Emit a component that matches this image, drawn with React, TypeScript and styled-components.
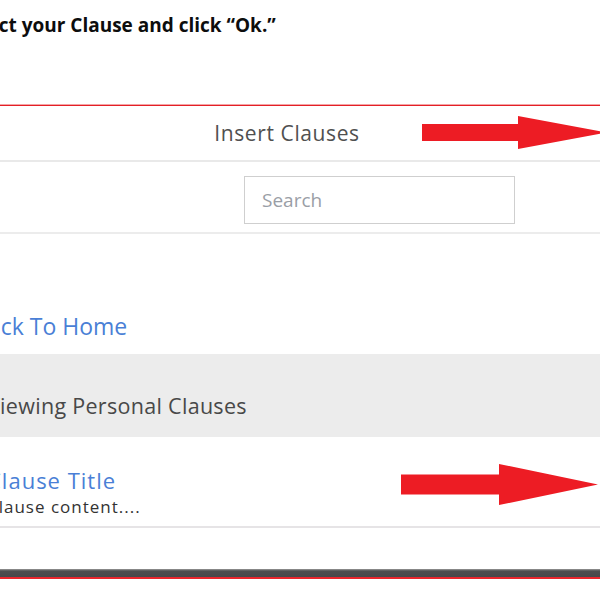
import styled, { createGlobalStyle } from "styled-components";

const GlobalStyle = createGlobalStyle`
  html, body {
    margin: 0;
    padding: 0;
    background: #ffffff;
  }
  body {
    width: 600px;
    height: 600px;
    overflow: hidden;
    font-family: "Open Sans", "Noto Sans", sans-serif;
  }
`;

function Arrow({ width, height, shaft, headAt }: { width: number; height: number; shaft: number; headAt: number }) {
  const mid = height / 2;
  const top = mid - shaft / 2;
  const bottom = mid + shaft / 2;
  return (
    <svg width={width} height={height} viewBox={`0 0 ${width} ${height}`}>
      <polygon
        points={`0,${top} ${headAt},${top} ${headAt},0 ${width},${mid} ${headAt},${height} ${headAt},${bottom} 0,${bottom}`}
        fill="#ed1c24"
      />
    </svg>
  );
}

export default function App() {
  return (
    <Page>
      <GlobalStyle />
      <Instruction>Select your Clause and click “Ok.”</Instruction>

      <Dialog>
        <Header>Insert Clauses</Header>
        <Toolbar>
          <SearchInput placeholder="Search" />
        </Toolbar>

        <Body>
          <BackLink>Back To Home</BackLink>
          <SectionBand>Viewing Personal Clauses</SectionBand>
          <ClauseItem>
            <ClauseTitle>Clause Title</ClauseTitle>
            <ClauseText>Clause content....</ClauseText>
          </ClauseItem>
        </Body>

        <Footer />
      </Dialog>

      <ArrowMark $top={116} $left={422}>
        <Arrow width={185} height={33} shaft={17} headAt={96} />
      </ArrowMark>
      <ArrowMark $top={464} $left={401}>
        <Arrow width={197} height={41} shaft={20} headAt={98} />
      </ArrowMark>
    </Page>
  );
}

const Page = styled.div`
  position: relative;
  width: 600px;
  height: 600px;
  overflow: hidden;
`;

const Instruction = styled.div`
  height: 104px;
  box-sizing: border-box;
  padding-top: 12px;
  margin-left: -40px;
  font-family: "Open Sans", "Liberation Sans", sans-serif;
  font-weight: 700;
  font-size: 19px;
  color: #0d0d0d;
  white-space: nowrap;
`;

const Dialog = styled.div`
  width: 826px;
  margin-left: -126px;
  border-top: 1px solid #f4a4a6;
  font-family: "Open Sans", "Noto Sans", sans-serif;
`;

const Header = styled.div`
  height: 54px;
  display: flex;
  align-items: center;
  justify-content: center;
  border-top: 1px solid #e41f26;
  border-bottom: 2px solid #e9e9e9;
  font-size: 21px;
  letter-spacing: 0.6px;
  color: #505050;
`;

const Toolbar = styled.div`
  height: 72px;
  box-sizing: border-box;
  display: flex;
  justify-content: flex-end;
  align-items: flex-start;
  padding: 14px 185px 0 0;
  border-bottom: 2px solid #ececec;
`;

const SearchInput = styled.input`
  width: 271px;
  height: 48px;
  box-sizing: border-box;
  border: 1px solid #cfcfcf;
  padding: 0 17px;
  font-family: "Open Sans", "Noto Sans", sans-serif;
  font-size: 19px;
  color: #555555;
  outline: none;

  &::placeholder {
    color: #9a9ea6;
  }
`;

const Body = styled.div`
  display: flex;
  flex-direction: column;
`;

const BackLink = styled.a`
  display: block;
  height: 120px;
  box-sizing: border-box;
  padding: 76px 0 0 99px;
  font-size: 23px;
  color: #4a7fd6;
  white-space: nowrap;
  cursor: pointer;
`;

const SectionBand = styled.div`
  height: 83px;
  box-sizing: border-box;
  padding: 37px 0 0 113px;
  background: #ececec;
  font-size: 21.5px;
  letter-spacing: 0.3px;
  color: #484848;
  white-space: nowrap;
`;

const ClauseItem = styled.div`
  height: 91px;
  box-sizing: border-box;
  padding: 28px 0 0 113px;
  display: flex;
  flex-direction: column;
  border-bottom: 2px solid #e6e4e6;
  white-space: nowrap;
`;

const ClauseTitle = styled.div`
  font-size: 22px;
  line-height: 30px;
  letter-spacing: 1px;
  color: #4a7fd6;
`;

const ClauseText = styled.div`
  font-size: 17px;
  line-height: 24px;
  letter-spacing: 1px;
  color: #333333;
`;

const Footer = styled.div`
  margin-top: 41px;
  height: 8px;
  background: linear-gradient(#9a9a9a 0, #4d4d4f 2px, #47474a 100%);
  border-bottom: 2px solid #e8262d;
`;

const ArrowMark = styled.div<{ $top: number; $left: number }>`
  position: absolute;
  top: ${({ $top }) => $top}px;
  left: ${({ $left }) => $left}px;
  line-height: 0;
`;
